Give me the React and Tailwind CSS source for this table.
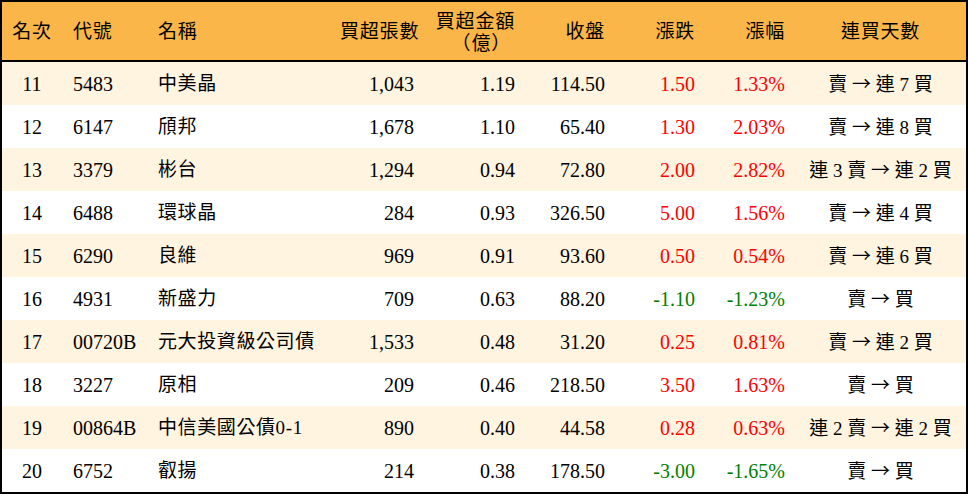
const rows = [
  { rank: 11, code: "5483", name: "中美晶", qty: "1,043", amt: "1.19", close: "114.50", chg: "1.50", pct: "1.33%", days: ["賣", "連 7 買"] },
  { rank: 12, code: "6147", name: "頎邦", qty: "1,678", amt: "1.10", close: "65.40", chg: "1.30", pct: "2.03%", days: ["賣", "連 8 買"] },
  { rank: 13, code: "3379", name: "彬台", qty: "1,294", amt: "0.94", close: "72.80", chg: "2.00", pct: "2.82%", days: ["連 3 賣", "連 2 買"] },
  { rank: 14, code: "6488", name: "環球晶", qty: "284", amt: "0.93", close: "326.50", chg: "5.00", pct: "1.56%", days: ["賣", "連 4 買"] },
  { rank: 15, code: "6290", name: "良維", qty: "969", amt: "0.91", close: "93.60", chg: "0.50", pct: "0.54%", days: ["賣", "連 6 買"] },
  { rank: 16, code: "4931", name: "新盛力", qty: "709", amt: "0.63", close: "88.20", chg: "-1.10", pct: "-1.23%", days: ["賣", "買"] },
  { rank: 17, code: "00720B", name: "元大投資級公司債", qty: "1,533", amt: "0.48", close: "31.20", chg: "0.25", pct: "0.81%", days: ["賣", "連 2 買"] },
  { rank: 18, code: "3227", name: "原相", qty: "209", amt: "0.46", close: "218.50", chg: "3.50", pct: "1.63%", days: ["賣", "買"] },
  { rank: 19, code: "00864B", name: "中信美國公債0-1", qty: "890", amt: "0.40", close: "44.58", chg: "0.28", pct: "0.63%", days: ["連 2 賣", "連 2 買"] },
  { rank: 20, code: "6752", name: "叡揚", qty: "214", amt: "0.38", close: "178.50", chg: "-3.00", pct: "-1.65%", days: ["賣", "買"] },
];

const font = { fontFamily: '"Liberation Serif", "Noto Sans CJK TC", serif' };

export default function App() {
  return (
    <div className="w-[968px] h-[496px] bg-white text-black whitespace-nowrap" style={font}>
      <div className="border-2 border-black">
        <div className="flex h-[60px] items-center bg-[#fbb64a] border-b-2 border-black text-[19px] leading-none tracking-[0.8px]">
          <div className="w-[60px] text-center">名次</div>
          <div className="w-[85px] pl-[11px]">代號</div>
          <div className="w-[193px] pl-[11px]">名稱</div>
          <div className="w-[74px] text-right">買超張數</div>
          <div className="w-[101px] text-right leading-[22px] pt-[4px]">
            <div>買超金額</div>
            <div className="pr-[4px]">（億）</div>
          </div>
          <div className="w-[90px] text-right">收盤</div>
          <div className="w-[90px] text-right">漲跌</div>
          <div className="w-[90px] text-right">漲幅</div>
          <div className="w-[181px] pl-[10px] text-center">連買天數</div>
        </div>
        {rows.map((r, i) => {
          const down = r.chg.startsWith("-");
          const color = down ? "text-[#008000]" : "text-[#ff0000]";
          return (
            <div
              key={r.rank}
              className={`flex h-[43px] items-center leading-none text-[20px] ${i % 2 === 0 ? "bg-[#fef4e0]" : "bg-white"}`}
            >
              <div className="w-[60px] text-center">{r.rank}</div>
              <div className="w-[85px] pl-[11px]">{r.code}</div>
              <div className="w-[193px] pl-[11px] text-[19px] tracking-[0.6px]">{r.name}</div>
              <div className="w-[74px] text-right">{r.qty}</div>
              <div className="w-[101px] text-right">{r.amt}</div>
              <div className="w-[90px] text-right">{r.close}</div>
              <div className={`w-[90px] text-right ${color}`}>{r.chg}</div>
              <div className={`w-[90px] text-right ${color}`}>{r.pct}</div>
              <div className="w-[181px] pl-[10px] text-center text-[19px] whitespace-pre">
                {r.days[0]}{" "}
                <span style={{ fontFamily: '"Noto Sans CJK TC", sans-serif' }}>→</span>
                {" "}{r.days[1]}
              </div>
            </div>
          );
        })}
      </div>
    </div>
  );
}
